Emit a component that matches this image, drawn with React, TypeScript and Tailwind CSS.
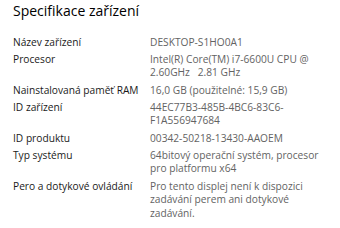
import React from "react";

const rows: { label: string; value: string[] }[] = [
  { label: "Název zařízení", value: ["DESKTOP-S1HO0A1"] },
  { label: "Procesor", value: ["Intel(R) Core(TM) i7-6600U CPU @", "2.60GHz   2.81 GHz"] },
  { label: "Nainstalovaná paměť RAM", value: ["16,0 GB (použitelné: 15,9 GB)"] },
  { label: "ID zařízení", value: ["44EC77B3-485B-4BC6-83C6-", "F1A556947684"] },
  { label: "ID produktu", value: ["00342-50218-13430-AAOEM"] },
  { label: "Typ systému", value: ["64bitový operační systém, procesor", "pro platformu x64"] },
  {
    label: "Pero a dotykové ovládání",
    value: ["Pro tento displej není k dispozici", "zadávání perem ani dotykové", "zadávání."],
  },
];

export default function App() {
  return (
    <div
      className="w-[340px] h-[228px] overflow-hidden bg-white pl-[13px]"
      style={{ fontFamily: '"Open Sans", "Noto Sans", sans-serif' }}
    >
      <h1 className="pt-[1px] text-[14px] leading-[20px] text-[#000000] font-normal">
        Specifikace zařízení
      </h1>
      <div className="mt-[14.5px] flex flex-col gap-[3.8px]">
        {rows.map((r) => (
          <div key={r.label} className="grid grid-cols-[137px_1fr] text-[10.2px] leading-[13.5px]">
            <div className="text-[#1a1a1a] whitespace-nowrap">{r.label}</div>
            <div className="text-[#636363] whitespace-pre">
              {r.value.map((v, i) => (
                <div key={i}>{v}</div>
              ))}
            </div>
          </div>
        ))}
      </div>
    </div>
  );
}
